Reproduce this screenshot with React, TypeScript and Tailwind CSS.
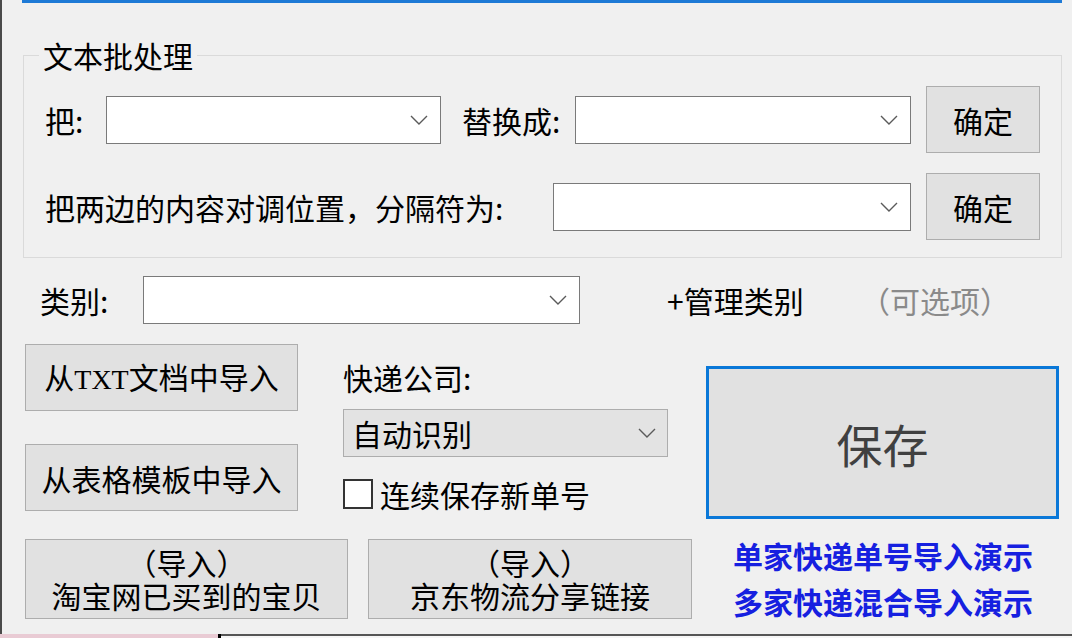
import type { ReactNode } from 'react';

const Chevron = () => (
  <svg width="18" height="10" viewBox="0 0 18 10" className="shrink-0">
    <polyline points="1,1 9,9 17,1" fill="none" stroke="#5a5a5a" strokeWidth="1.4" />
  </svg>
);

const Combo = ({ className, children }: { className: string; children?: ReactNode }) => (
  <div className={`flex h-[48px] items-center justify-between border border-[#7a7a7a] bg-white pr-[12px] ${className}`}>
    <span className="pl-[8px]">{children}</span>
    <Chevron />
  </div>
);

const Button = ({ className, children }: { className: string; children: ReactNode }) => (
  <div className={`flex items-center justify-center border border-[#adadad] bg-[#e1e1e1] text-center ${className}`}>
    <span>{children}</span>
  </div>
);

export default function App() {
  return (
    <div className="flex h-[638px] w-[1072px] flex-col overflow-hidden bg-[#f0f0f0] font-['Noto_Sans_CJK_SC','Noto_Sans',sans-serif] text-[30px] leading-[34px] text-black shadow-[inset_2px_0_0_#4a4a4a]">
      <div className="ml-[22px] h-[3px] w-[1040px] bg-[#1e7ad6]" />

      <fieldset className="mt-[35px] ml-[23px] w-[1039px] border border-[#dadada] pb-[17px]">
        <legend className="ml-[15px] px-[4px] leading-[34px]">文本批处理</legend>

        <div className="mt-[14px] flex h-[67px] items-center pl-[21px]">
          <span className="w-[61px] whitespace-nowrap">把:</span>
          <Combo className="w-[335px]" />
          <span className="ml-[21px] w-[113px] whitespace-nowrap">替换成:</span>
          <Combo className="w-[336px]" />
          <Button className="ml-[15px] h-[67px] w-[114px]">确定</Button>
        </div>

        <div className="mt-[20px] flex h-[67px] items-center pl-[21px]">
          <span className="w-[508px] whitespace-nowrap">把两边的内容对调位置，分隔符为:</span>
          <Combo className="w-[358px]" />
          <Button className="ml-[15px] h-[67px] w-[114px]">确定</Button>
        </div>
      </fieldset>

      <div className="mt-[18px] flex h-[48px] items-center pl-[40px]">
        <span className="w-[103px] whitespace-nowrap">类别:</span>
        <Combo className="w-[437px]" />
        <span className="ml-[87px] w-[193px] whitespace-nowrap">+管理类别</span>
        <span className="whitespace-nowrap text-[#8a8a8a]">（可选项）</span>
      </div>

      <div className="mt-[20px] flex items-start">
        <div className="ml-[25px] flex w-[273px] flex-col gap-[33px]">
          <Button className="h-[67px] w-[273px]">
            从<span className="font-['Liberation_Serif',serif] text-[28px]">TXT</span>文档中导入
          </Button>
          <Button className="h-[67px] w-[273px]">从表格模板中导入</Button>
        </div>

        <div className="ml-[45px] flex w-[325px] flex-col">
          <span className="mt-[16px] whitespace-nowrap">快递公司:</span>
          <div className="mt-[15px] flex h-[48px] w-[325px] items-center justify-between border border-[#adadad] bg-[#e3e3e3] pr-[11px]">
            <span className="pl-[8px]">自动识别</span>
            <Chevron />
          </div>
          <div className="mt-[20px] flex h-[34px] items-center">
            <span className="h-[30px] w-[30px] border-2 border-[#333] bg-white" />
            <span className="ml-[7px] whitespace-nowrap">连续保存新单号</span>
          </div>
        </div>

        <div className="mt-[22px] ml-[38px] flex h-[153px] w-[353px] items-center justify-center border-[3px] border-[#0a78d8] bg-[#e1e1e1] text-[46px] leading-[56px] text-[#404040]">
          保存
        </div>
      </div>

      <div className="mt-[20px] flex items-start">
        <Button className="ml-[25px] h-[80px] w-[323px] leading-[33px]">
          （导入）
          <br />
          淘宝网已买到的宝贝
        </Button>
        <Button className="ml-[20px] h-[80px] w-[324px] leading-[33px]">
          （导入）
          <br />
          京东物流分享链接
        </Button>
        <div className="-mt-[7px] ml-[41px] flex flex-col font-bold leading-[46px] text-[#1620e0]">
          <span className="whitespace-nowrap">单家快递单号导入演示</span>
          <span className="whitespace-nowrap">多家快递混合导入演示</span>
        </div>
      </div>

      <div className="mt-auto flex h-[4px]">
        <div className="w-[218px] bg-[#e9cbd4]" />
        <div className="w-[3px] bg-black" />
        <div className="flex-1 border-t-2 border-[#555] bg-[#f6f6f6]" />
      </div>
    </div>
  );
}
